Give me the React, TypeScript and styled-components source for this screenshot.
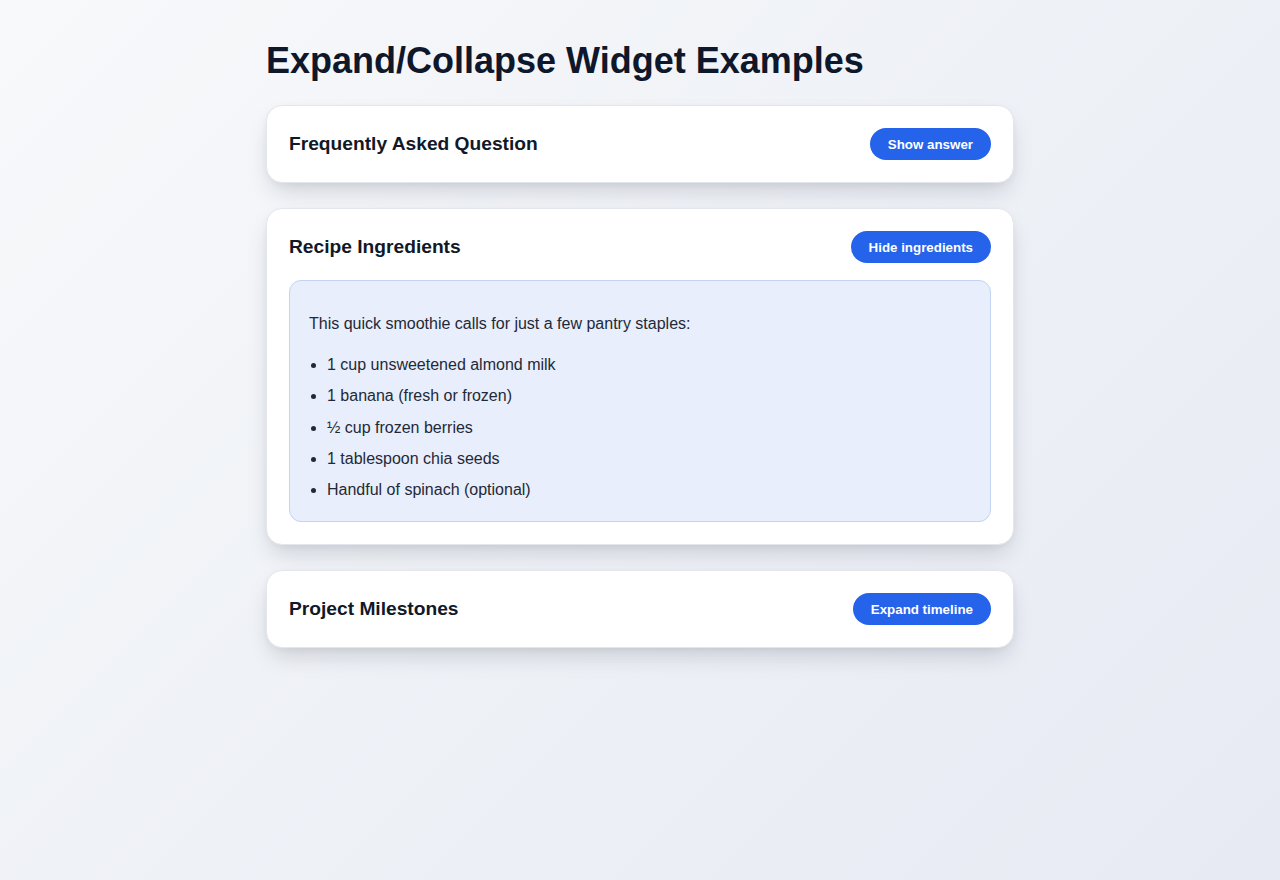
import React, { useState } from "react";
import styled, { createGlobalStyle } from "styled-components";

const Global = createGlobalStyle`
  html, body { margin: 0; padding: 0; }
  body {
    min-height: 880px;
    font-family: "Liberation Sans", Arial, Helvetica, sans-serif;
    background: linear-gradient(135deg, #f8f9fb 0%, #eef1f6 50%, #e7eaf3 100%);
    color: #111827;
  }
`;

const Page = styled.main`
  width: 748px;
  margin: 0 auto;
  padding: 39px 0 40px;
`;

const Title = styled.h1`
  margin: 0 0 23px;
  font-size: 36px;
  line-height: 43px;
  font-weight: 700;
  color: #0f172a;
`;

const Stack = styled.div`
  display: flex;
  flex-direction: column;
  gap: 25px;
`;

const Card = styled.section`
  background: #ffffff;
  border: 1px solid #e3e6ec;
  border-radius: 16px;
  padding: 22px;
  box-shadow: 0 12px 24px -6px rgba(15, 23, 42, 0.18), 0 2px 6px rgba(15, 23, 42, 0.04);
`;

const Header = styled.div`
  display: flex;
  align-items: center;
  justify-content: space-between;
`;

const CardTitle = styled.h2`
  margin: 0;
  font-size: 19.2px;
  font-weight: 700;
  color: #111827;
`;

const Toggle = styled.button`
  height: 32px;
  padding: 0 18px;
  border: none;
  border-radius: 999px;
  background: #2563eb;
  color: #ffffff;
  font-family: "Liberation Sans", Arial, sans-serif;
  font-size: 13.33px;
  font-weight: 700;
  cursor: pointer;
`;

const Panel = styled.div`
  margin-top: 17px;
  background: #e8eefb;
  border: 1px solid #c3d3f3;
  border-radius: 12px;
  padding: 20px 19px 20px;
  font-size: 16px;
  line-height: 22px;
  color: #1f2937;
`;

const Intro = styled.p`
  margin: 12px 0 19px;
`;

const List = styled.ul`
  margin: 0;
  padding-left: 18px;
`;

const Item = styled.li`
  & + & { margin-top: 9.25px; }
`;

type W = { title: string; show: string; hide: string; open: boolean; content?: React.ReactNode };

const Widget: React.FC<W> = ({ title, show, hide, open: initial, content }) => {
  const [open, setOpen] = useState(initial);
  return (
    <Card>
      <Header>
        <CardTitle>{title}</CardTitle>
        <Toggle onClick={() => setOpen(!open)}>{open ? hide : show}</Toggle>
      </Header>
      {open && content ? <Panel>{content}</Panel> : null}
    </Card>
  );
};

const ingredients = [
  "1 cup unsweetened almond milk",
  "1 banana (fresh or frozen)",
  "½ cup frozen berries",
  "1 tablespoon chia seeds",
  "Handful of spinach (optional)",
];

export default function App() {
  return (
    <>
      <Global />
      <Page>
        <Title>Expand/Collapse Widget Examples</Title>
        <Stack>
          <Widget
            title="Frequently Asked Question"
            show="Show answer"
            hide="Hide answer"
            open={false}
            content={<Intro>You can toggle each section independently.</Intro>}
          />
          <Widget
            title="Recipe Ingredients"
            show="Show ingredients"
            hide="Hide ingredients"
            open={true}
            content={
              <>
                <Intro>This quick smoothie calls for just a few pantry staples:</Intro>
                <List>
                  {ingredients.map((i) => (
                    <Item key={i}>{i}</Item>
                  ))}
                </List>
              </>
            }
          />
          <Widget
            title="Project Milestones"
            show="Expand timeline"
            hide="Collapse timeline"
            open={false}
            content={<Intro>Kickoff, design review, launch.</Intro>}
          />
        </Stack>
      </Page>
    </>
  );
}
